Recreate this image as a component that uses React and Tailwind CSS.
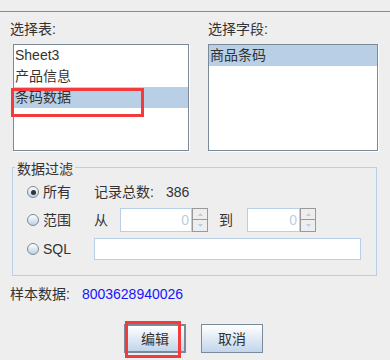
import React from "react";

function Radio({ checked }) {
  return (
    <div className="w-[12px] h-[12px] rounded-full border border-[#7a8a99] bg-gradient-to-b from-white to-[#bdd0e6] flex items-center justify-center shrink-0">
      {checked && <div className="w-[5px] h-[5px] rounded-full bg-[#333333]" />}
    </div>
  );
}

function Spinner({ width }) {
  return (
    <div className="flex h-[24px]">
      <div
        className="h-[24px] border border-[#b8cfe5] bg-white text-right pr-[2px] text-[14px] leading-[22px] text-[#b8cfe5]"
        style={{ width }}
      >
        0
      </div>
      <div className="w-[16px] h-[24px] flex flex-col">
        <div className="h-[12px] border border-[#999999] bg-[#eeeeee] flex items-center justify-center">
          <svg width="5" height="3" viewBox="0 0 5 3"><path d="M0 3 L2.5 0 L5 3 Z" fill="#b8cfe5" /></svg>
        </div>
        <div className="h-[12px] border border-t-0 border-[#999999] bg-[#eeeeee] flex items-center justify-center">
          <svg width="5" height="3" viewBox="0 0 5 3"><path d="M0 0 L2.5 3 L5 0 Z" fill="#b8cfe5" /></svg>
        </div>
      </div>
    </div>
  );
}

export default function App() {
  return (
    <div className="relative w-[390px] h-[360px] overflow-hidden bg-[#eeeeee] text-[#333333] text-[14px] font-['Liberation_Sans','Noto_Sans_CJK_SC',sans-serif]">
      <div className="mt-[11px] h-px bg-[#6f8dc6]" />
      <div className="flex mt-[7px]">
        <div className="ml-[10px] w-[198px]">
          <div className="h-[20px] leading-[20px]">选择表:</div>
          <div className="mt-[5px] ml-[3px] w-[176px] h-[107px] border border-[#7a8a99] bg-white shadow-[1px_1px_0_#ffffff] py-0">
            <div className="h-[21px] leading-[21px] pl-[1px]">Sheet3</div>
            <div className="h-[21px] leading-[21px] pl-[1px]">产品信息</div>
            <div className="h-[21px] leading-[21px] pl-[1px] bg-[#b8cfe5]">条码数据</div>
          </div>
        </div>
        <div>
          <div className="h-[20px] leading-[20px]">选择字段:</div>
          <div className="mt-[5px] w-[170px] h-[107px] border border-[#7a8a99] bg-white shadow-[1px_1px_0_#ffffff]">
            <div className="h-[21px] leading-[21px] pl-[1px] bg-[#b8cfe5]">商品条码</div>
          </div>
        </div>
      </div>

      <div className="ml-[12px] mt-[16px] w-[365px] h-[109px] border border-[#b8cfe5]">
        <div className="-mt-[9px] ml-[2px] h-[20px] leading-[20px] px-[2px] bg-[#eeeeee] w-fit">数据过滤</div>
        <div className="flex items-center h-[24px] mt-[1px]">
          <div className="w-[81px] flex items-center pl-[14px] gap-[4px]">
            <Radio checked />
            <span>所有</span>
          </div>
          <span>记录总数:</span>
          <span className="ml-[12px]">386</span>
        </div>
        <div className="flex items-center h-[24px] mt-[4px]">
          <div className="w-[81px] flex items-center pl-[14px] gap-[4px]">
            <Radio />
            <span>范围</span>
          </div>
          <span className="w-[26px]">从</span>
          <Spinner width={72} />
          <span className="ml-[11px] w-[28px]">到</span>
          <Spinner width={53} />
        </div>
        <div className="flex items-center h-[22px] mt-[6px]">
          <div className="w-[81px] flex items-center pl-[14px] gap-[4px]">
            <Radio />
            <span>SQL</span>
          </div>
          <div className="w-[267px] h-[22px] border border-[#b8cfe5] bg-white" />
        </div>
      </div>

      <div className="flex items-center h-[20px] mt-[8px] ml-[10px]">
        <span>样本数据:</span>
        <span className="ml-[12px] text-[#1515ff]">8003628940026</span>
      </div>

      <div className="flex mt-[20px] ml-[124px] gap-[15px]">
        <button className="w-[62px] h-[29px] border-2 border-[#7a8a99] bg-gradient-to-b from-white to-[#c2d5ea] text-[14px] text-[#333333] leading-none">编辑</button>
        <button className="w-[62px] h-[29px] border border-[#7a8a99] bg-gradient-to-b from-white to-[#c2d5ea] text-[14px] text-[#333333] leading-none">取消</button>
      </div>

      <div className="absolute left-[11px] top-[88px] w-[133px] h-[29px] border-[3px] border-[#f43b3b]" />
      <div className="absolute left-[125px] top-[321px] w-[56px] h-[37px] border-[3px] border-[#f43b3b]" />
    </div>
  );
}
